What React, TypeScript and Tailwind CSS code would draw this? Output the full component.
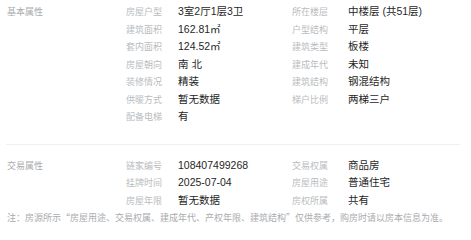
const BASIC = [
  ['房屋户型', '3室2厅1层3卫', '所在楼层', '中楼层 (共51层)'],
  ['建筑面积', '162.81㎡', '户型结构', '平层'],
  ['套内面积', '124.52㎡', '建筑类型', '板楼'],
  ['房屋朝向', '南 北', '建成年代', '未知'],
  ['装修情况', '精装', '建筑结构', '钢混结构'],
  ['供暖方式', '暂无数据', '梯户比例', '两梯三户'],
  ['配备电梯', '有', '', ''],
];

const TRADE = [
  ['链家编号', '108407499268', '交易权属', '商品房'],
  ['挂牌时间', '2025-07-04', '房屋用途', '普通住宅'],
  ['房屋年限', '暂无数据', '房权所属', '共有'],
];

const cjk = { fontFamily: '"Noto Sans CJK SC", "Liberation Sans", sans-serif' };
const latin = { fontFamily: '"Liberation Sans", "Noto Sans CJK SC", sans-serif' };

function Section({ title, rows }: { title: string; rows: string[][] }) {
  return (
    <div className="flex leading-[17.5px]">
      <div className="w-[119px] shrink-0 text-[9px] text-[#a9abae]">{title}</div>
      <div className="flex-1">
        {rows.map((r) => (
          <div key={r[0]} className="flex h-[17.5px] items-center">
            <span className="w-[52px] text-[9px] text-[#b9bcc0]">{r[0]}</span>
            <span className="w-[114px] text-[10.5px] text-[#1f1f1f]" style={latin}>
              {r[1]}
            </span>
            <span className="w-[56px] text-[9px] text-[#b9bcc0]">{r[2]}</span>
            <span className="text-[10.5px] text-[#1f1f1f]" style={latin}>
              {r[3]}
            </span>
          </div>
        ))}
      </div>
    </div>
  );
}

export default function App() {
  return (
    <div className="w-[471px] h-[240px] bg-white overflow-hidden pl-[7px] pt-[3px]" style={cjk}>
      <Section title="基本属性" rows={BASIC} />
      <div className="mt-[18px] mb-[12px] mr-[11px] -ml-px border-t border-[#f0f0f0]" />
      <Section title="交易属性" rows={TRADE} />
      <p className="text-[9px] leading-[17.5px] text-[#a9abae] whitespace-nowrap">
        注：房源所示“房屋用途、交易权属、建成年代、产权年限、建筑结构”仅供参考，购房时请以房本信息为准。
      </p>
    </div>
  );
}
